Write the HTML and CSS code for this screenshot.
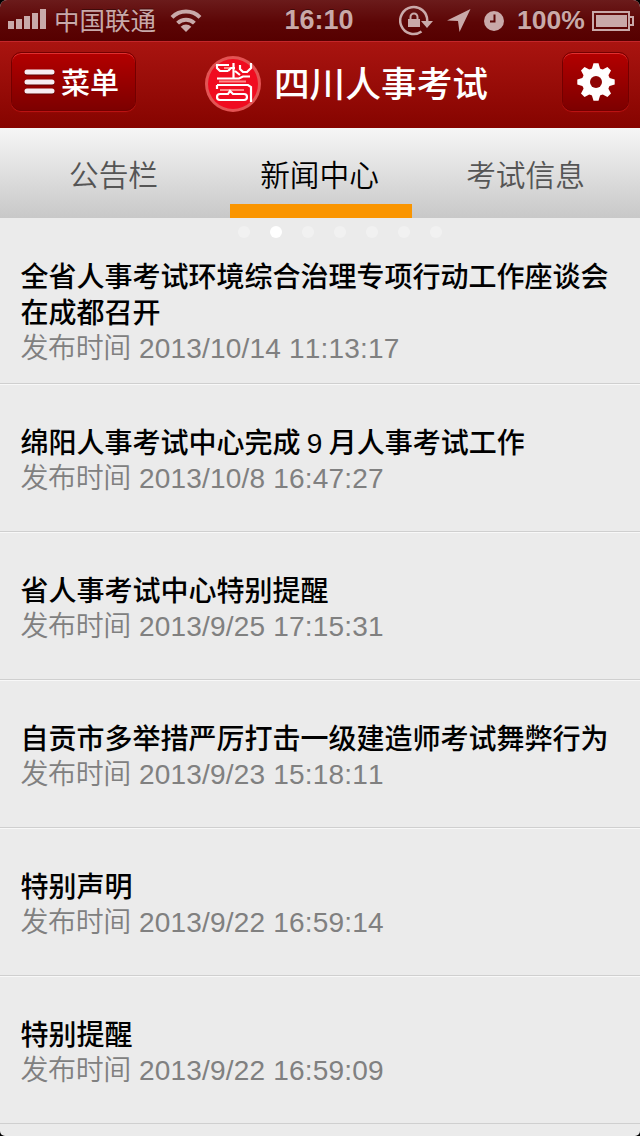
FILE: index.html
```html
<!DOCTYPE html>
<html lang="zh-CN">
<head>
    <meta charset="utf-8">
    <title>四川人事考试</title>
    <link rel="stylesheet" href="styles.css">
</head>
<body>
<div class="screen">
    <div class="status-bar">
        <div class="status-left">
            <svg class="signal" width="40" height="22" viewBox="0 0 40 22">
                <path d="M0 13h6v8H0zM8 11h6v10H8zM16 8h6v13h-6zM24 5h6v16h-6zM32 1h6v20h-6z"/>
            </svg>
            <span class="carrier">中国联通</span>
            <svg class="wifi" width="32" height="24" viewBox="0 0 32 24">
                <path d="M16 23l-5.300-5.300a7.500 7.500 0 0 1 10.600 0z"/>
                <path class="arc" d="M7.600 14.200a11.900 11.900 0 0 1 16.800 0M2 8.400a19.800 19.800 0 0 1 28 0"/>
            </svg>
        </div>
        <div class="clock">16:10</div>
        <div class="status-right">
            <svg class="lock" width="35" height="32" viewBox="0 0 35 32">
                <path class="ring" d="M22.500 26.500A13.500 13.500 0 1 1 28.200 16"/>
                <path d="M22 16h12l-6 7z"/>
                <path d="M9 14h12v8H9z"/>
                <path class="shackle" d="M11.500 15v-3a3.500 3.500 0 0 1 7 0v3"/>
            </svg>
            <svg class="arrow" width="24" height="24" viewBox="0 0 24 24">
                <path d="M23.500 0L12.500 23l-1.500-11L0 11.500z"/>
            </svg>
            <svg class="alarm" width="20" height="20" viewBox="0 0 20 20">
                <circle cx="10" cy="10" r="10"/>
                <path class="hands" d="M10.500 3.500v7H6"/>
            </svg>
            <span class="percent">100%</span>
            <svg class="battery" width="42" height="20" viewBox="0 0 42 20">
                <path class="case" d="M1 1h36v18H1zM37 6h4v8h-4"/>
                <path d="M4 4h31v12H4z"/>
            </svg>
        </div>
    </div>

    <div class="header">
        <a class="btn btn-menu">
            <svg width="31" height="26" viewBox="0 0 31 26">
                <path d="M3 3h25M3 13h25M3 22h25"/>
            </svg>
            <span>菜单</span>
        </a>
        <div class="brand">
            <svg class="seal" width="56" height="58" viewBox="0 0 56 58">
                <circle class="seal-edge" cx="28" cy="30" r="28"/>
                <circle class="seal-face" cx="28" cy="30" r="25"/>
                <path class="seal-tint" d="M14 27.500h27M15 36h24M19 14h6"/>
                <path class="seal-line" d="M11 11h13M12 11v3l3 3h8M28.500 9v15M23 17l3-3h4M35 11v4l3 3h4l4-4V9M30 17l5 4M12 24.500h22l4-2h7M12 31h31l3 2v15M12 31v4M12 43a3 3 0 0 1 3-3h8l2-3 3 3h11a3 3 0 0 1 0 6H15a3 3 0 0 1-3-3z"/>
            </svg>
            <span class="brand-name">四川人事考试</span>
        </div>
        <a class="btn btn-settings">
            <svg width="38" height="38" viewBox="-19 -19 38 38">
                <path d="M-4.500 -12L-2.500 -18.700h5L4.500 -12v24L2.500 18.700h-5L-4.500 12z"/>
                <path d="M-4.500 -12L-2.500 -18.700h5L4.500 -12v24L2.500 18.700h-5L-4.500 12z" transform="rotate(45)"/>
                <path d="M-4.500 -12L-2.500 -18.700h5L4.500 -12v24L2.500 18.700h-5L-4.500 12z" transform="rotate(90)"/>
                <path d="M-4.500 -12L-2.500 -18.700h5L4.500 -12v24L2.500 18.700h-5L-4.500 12z" transform="rotate(135)"/>
                <circle r="14"/>
                <circle class="hole" r="6"/>
            </svg>
        </a>
    </div>

    <div class="tabs">
        <div class="tab">公告栏</div>
        <div class="tab active">新闻中心</div>
        <div class="tab">考试信息</div>
    </div>

    <div class="content">
        <div class="dots">
            <i></i><i class="on"></i><i></i><i></i><i></i><i></i><i></i>
        </div>
        <ul class="news">
            <li>
                <h2>全省人事考试环境综合治理专项行动工作座谈会在成都召开</h2>
                <p><span>发布时间</span> 2013/10/14 11:13:17</p>
            </li>
            <li>
                <h2>绵阳人事考试中心完成 9 月人事考试工作</h2>
                <p><span>发布时间</span> 2013/10/8 16:47:27</p>
            </li>
            <li>
                <h2>省人事考试中心特别提醒</h2>
                <p><span>发布时间</span> 2013/9/25 17:15:31</p>
            </li>
            <li>
                <h2>自贡市多举措严厉打击一级建造师考试舞弊行为</h2>
                <p><span>发布时间</span> 2013/9/23 15:18:11</p>
            </li>
            <li>
                <h2>特别声明</h2>
                <p><span>发布时间</span> 2013/9/22 16:59:14</p>
            </li>
            <li>
                <h2>特别提醒</h2>
                <p><span>发布时间</span> 2013/9/22 16:59:09</p>
            </li>
        </ul>
    </div>
</div>
</body>
</html>
```
FILE: styles.css
```css
* {
    box-sizing: border-box;
}

body {
    margin: 0;
    background: #000;
    font-family: "Liberation Sans", "Noto Sans CJK SC", sans-serif;
    font-kerning: none;
}

svg {
    display: block;
    flex: none;
}

.screen {
    width: 640px;
    height: 1136px;
    overflow: hidden;
    border-radius: 7px 7px 5px 5px;
    background: #ebebeb;
}

/* status bar */
.status-bar {
    display: grid;
    grid-template-columns: 284px 70px 1fr;
    align-items: center;
    height: 41px;
    background: linear-gradient(#6b1b1b, #5c0505 55%, #560000);
    color: #c9a9a9;
    fill: #c9a9a9;
    font-size: 26px;
    font-weight: bold;
    line-height: 38px;
    text-shadow: 0 -1px 0 rgba(0, 0, 0, 0.4);
}

.status-left,
.status-right {
    display: flex;
    align-items: center;
    height: 38px;
}

.status-left {
    padding-left: 8px;
}

.signal {
    margin: 0 6px 4px 0;
}

.carrier {
    width: 104px;
    font-size: 25.5px;
    font-weight: 400;
    white-space: nowrap;
}

.wifi {
    margin-left: 12px;
}

.wifi .arc {
    fill: none;
    stroke: #c9a9a9;
    stroke-width: 4;
}

.clock {
    height: 40px;
    font-size: 27px;
    text-align: center;
    white-space: nowrap;
}

.status-right {
    padding-left: 45px;
}

.ring,
.shackle,
.case {
    fill: none;
    stroke: #c9a9a9;
    stroke-width: 2;
}

.ring {
    stroke-width: 2.5;
}

.arrow {
    margin-left: 13px;
}

.alarm {
    margin-left: 13px;
}

.hands {
    fill: none;
    stroke: #5c0606;
    stroke-width: 2;
}

.percent {
    width: 68px;
    margin: -2px 0 0 13px;
    font-size: 26.5px;
}

.battery {
    margin-left: 7px;
}

/* header */
.header {
    display: flex;
    justify-content: space-between;
    height: 87px;
    padding: 10px 11px 0;
    border-top: 1px solid #c4262a;
    background: linear-gradient(#a91410, #860400);
    color: #fff;
}

.btn {
    display: flex;
    align-items: center;
    height: 59px;
    border: 1px solid #730000;
    border-radius: 10px;
    background: linear-gradient(#b30000, #7d0000);
    box-shadow: inset 0 1px 0 #e03030, 0 1px 1px #c01515;
}

.btn-menu {
    width: 125px;
    padding-left: 12px;
    font-size: 29px;
    font-weight: 500;
    line-height: 56px;
}

.btn-menu span {
    padding-top: 5px;
}

.btn-menu svg {
    margin-right: 6px;
    fill: none;
    stroke: #f7edf2;
    stroke-width: 5;
    stroke-linecap: round;
    filter: drop-shadow(0 1px 0 #600000);
}

.brand {
    display: flex;
    align-items: center;
    height: 62px;
    margin-right: 5px;
}

.seal-edge {
    fill: #e35454;
}

.seal-face {
    fill: #f00c20;
}

.seal-line,
.seal-tint {
    fill: none;
    stroke: #fff;
    stroke-width: 2.2;
}

.seal-tint {
    stroke: #f88;
}

.brand-name {
    margin-left: 13px;
    padding-top: 4px;
    font-size: 35.7px;
    font-weight: 500;
    line-height: 58px;
}

.btn-settings {
    justify-content: center;
    width: 67px;
    padding: 1px 0 0 1px;
    fill: #fff;
}

.btn-settings .hole {
    fill: #8f0505;
}

/* tabs */
.tabs {
    display: grid;
    grid-template-columns: 182px 182px 182px;
    justify-content: center;
    column-gap: 24px;
    height: 90px;
    padding-left: 2px;
    background: linear-gradient(#f6f6f6, #c8c8c8);
}

.tab {
    height: 90px;
    padding-right: 3px;
    color: #555;
    font-size: 29.7px;
    font-weight: 350;
    line-height: 96px;
    text-align: center;
}

.tab.active {
    border-bottom: 14px solid #fa9500;
    color: #000;
}

/* list */
.dots {
    display: flex;
    justify-content: center;
    gap: 20px;
    height: 18px;
    padding: 8px 0 0 40px;
}

.dots i {
    flex: none;
    width: 12px;
    height: 12px;
    border-radius: 50%;
    background: #f1f1f1;
}

.dots .on {
    background: #fff;
}

.news {
    margin: 0;
    padding: 0;
    list-style: none;
}

.news li {
    display: flex;
    flex-direction: column;
    justify-content: center;
    height: 148px;
    padding: 6px 30px 0 20.500px;
    border-top: 1px solid #f8f8f8;
    border-bottom: 1px solid #cfcfcf;
}

.news li:first-child {
    border-top-color: transparent;
}

.news h2,
.news p {
    margin: 0;
    font-size: 28px;
    line-height: 36px;
}

.news h2 {
    padding-top: 1px;
    margin-bottom: -1px;
    font-weight: 500;
    color: #000;
    word-spacing: -1.500px;
}

.news p {
    color: #808080;
    letter-spacing: 0.2px;
}

.news p span {
    font-weight: 350;
    letter-spacing: -0.4px;
}
```
